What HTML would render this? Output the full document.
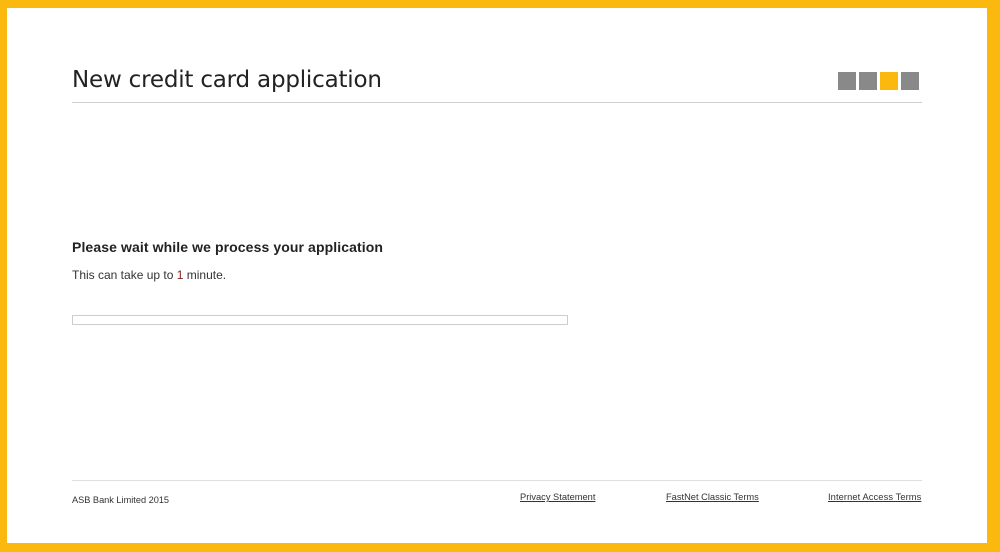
<!DOCTYPE html>
<html><head><style>
body{margin:0;width:1000px;height:552px;background:#fbb90f;position:relative;overflow:hidden;font-family:"Liberation Sans",sans-serif;}
.box{position:absolute;left:7px;top:8px;width:980px;height:535px;background:#fff;}
.t{position:absolute;left:72px;top:67px;color:#222;font-family:"DejaVu Sans","Liberation Sans",sans-serif;font-size:23px;letter-spacing:-0.2px;}
.hr{position:absolute;left:72px;width:850px;height:1px;background:#d0d0d0;}
.sq{position:absolute;top:72px;width:18px;height:18px;background:#898989;}
a{color:#333;text-decoration:underline;font-size:9.3px;position:absolute;top:492px;}
</style></head><body>
<div class="box"></div>
<div class="t">New credit card application</div>
<div class="hr" style="top:102px"></div>
<div class="sq" style="left:838px"></div><div class="sq" style="left:859px"></div><div class="sq" style="left:880px;background:#fbb90f"></div><div class="sq" style="left:901px"></div>
<div style="position:absolute;left:72px;top:239px;font-size:14px;font-weight:bold;color:#222;letter-spacing:0.1px">Please wait while we process your application</div>
<div style="position:absolute;left:72px;top:268px;font-size:12px;color:#333">This can take up to <span style="color:#8a1a1a">1</span> minute.</div>
<div style="position:absolute;left:72px;top:315px;width:494px;height:8px;border:1px solid #ccc"></div>
<div class="hr" style="top:480px;background:#e0e0e0"></div>
<div style="position:absolute;left:72px;top:495px;font-size:9.2px;color:#333">ASB Bank Limited 2015</div>
<a style="left:520px">Privacy Statement</a>
<a style="left:666px">FastNet Classic Terms</a>
<a style="left:828px;letter-spacing:0.1px">Internet Access Terms</a>
</body></html>
